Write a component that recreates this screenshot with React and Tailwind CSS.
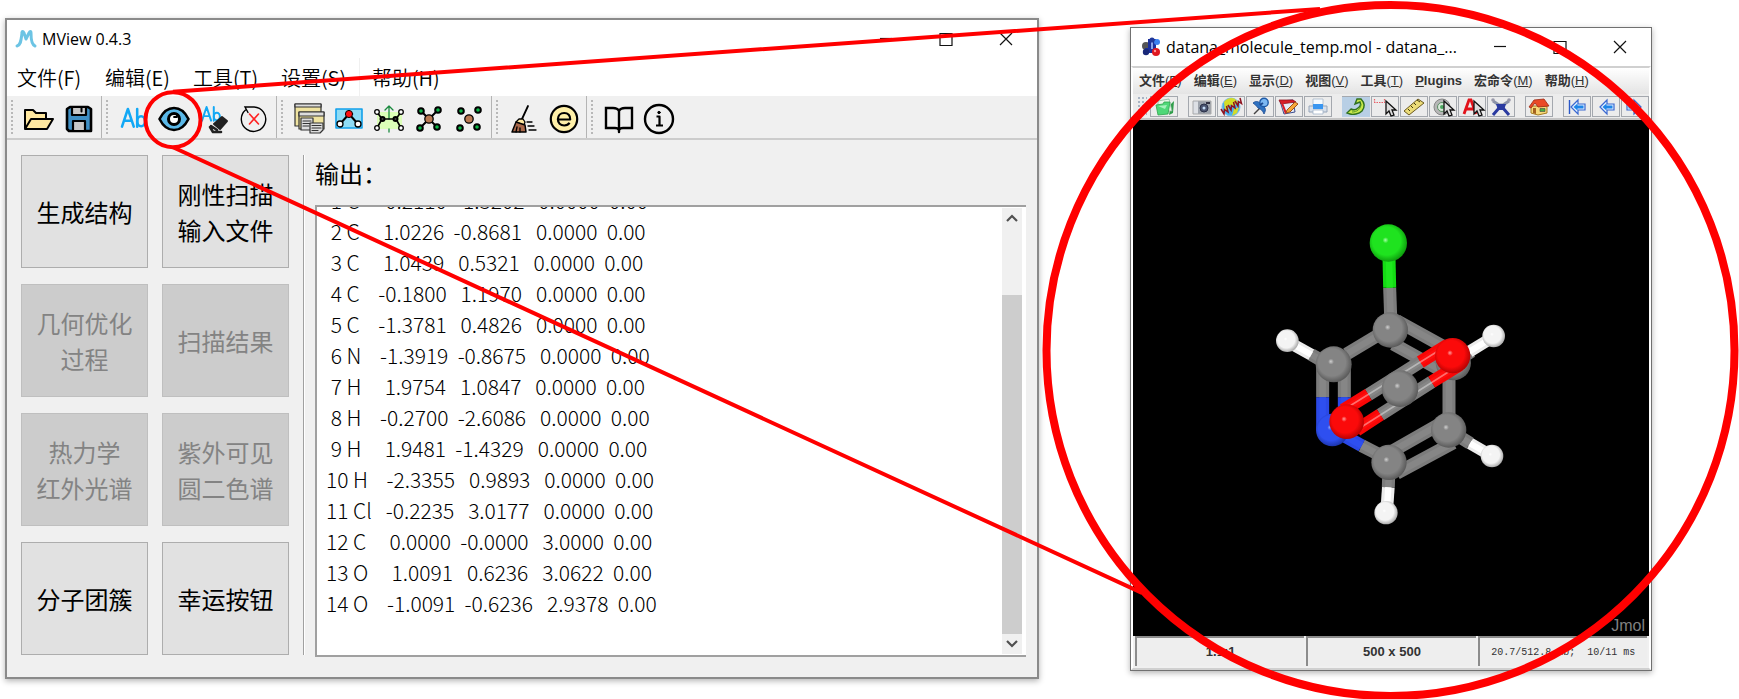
import React from "react";

const atoms = [
  " 1 C    -0.2110  -1.3202   0.0000  0.00",
  " 2 C     1.0226  -0.8681   0.0000  0.00",
  " 3 C     1.0439   0.5321   0.0000  0.00",
  " 4 C    -0.1800   1.1970   0.0000  0.00",
  " 5 C    -1.3781   0.4826   0.0000  0.00",
  " 6 N    -1.3919  -0.8675   0.0000  0.00",
  " 7 H     1.9754   1.0847   0.0000  0.00",
  " 8 H    -0.2700  -2.6086   0.0000  0.00",
  " 9 H     1.9481  -1.4329   0.0000  0.00",
  "10 H    -2.3355   0.9893   0.0000  0.00",
  "11 Cl   -0.2235   3.0177   0.0000  0.00",
  "12 C     0.0000  -0.0000   3.0000  0.00",
  "13 O     1.0091   0.6236   3.0622  0.00",
  "14 O    -1.0091  -0.6236   2.9378  0.00",
];

const actions = [
  { lines: ["生成结构"] },
  { lines: ["刚性扫描", "输入文件"] },
  { lines: ["几何优化", "过程"], disabled: true },
  { lines: ["扫描结果"], disabled: true },
  { lines: ["热力学", "红外光谱"], disabled: true },
  { lines: ["紫外可见", "圆二色谱"], disabled: true },
  { lines: ["分子团簇"] },
  { lines: ["幸运按钮"] },
];

/* ---------- main window icons, drawn on a 32 x 32 grid ---------- */

const I = ({ children }) => (
  <svg viewBox="0 0 32 32" className="size-8" fill="none" stroke="#000" strokeWidth="2" strokeLinejoin="round" strokeLinecap="round">
    {children}
  </svg>
);

const OpenIcon = () => (
  <I>
    <path d="M2 25V7h8l3 3h10v5" fill="#ffe8a0" />
    <path d="M2 26 8 16h22l-6 10z" fill="#ffe8a0" />
  </I>
);
const SaveIcon = () => (
  <I>
    <path d="M7 4h18l3 2v22H6l-2-2V6z" fill="#3f8fc4" strokeWidth="2.6" />
    <path d="M9 4h14v8H9z" fill="#c8c8c8" strokeWidth="2.2" />
    <path d="M10 18h12v10H10z" fill="#c8c8c8" strokeWidth="2.2" />
    <path d="M18.500 5.500v3" />
  </I>
);
const Ab = ({ x, y, s }) => (
  <g transform={`translate(${x} ${y}) scale(${s})`} stroke="#12a8f5" strokeWidth="2.600">
    <path d="M0 18 6 0l6 18M2.500 12h7M15.500 0v18" />
    <ellipse cx="19.500" cy="12.500" rx="4" ry="5" />
  </g>
);
const LabelIcon = () => (
  <I>
    <Ab x={4} y={6} s={0.98} />
  </I>
);
const EyeIcon = () => (
  <I>
    <path d="M1.500 16C5 9 10 5 16 5s11 4 14.500 11C27 23 22 27 16 27S5 23 1.500 16z" fill="#5ab8e8" strokeWidth="2.600" />
    <circle cx="16" cy="16" r="5.500" fill="#fff" strokeWidth="3" />
    <path d="M16 14h3v-3" strokeWidth="1.800" />
  </I>
);
const EraseLabelIcon = () => (
  <I>
    <Ab x={4} y={4} s={0.76} />
    <path d="m16 21 8-7 5 4-7 8z" fill="#222" stroke="#222" />
    <path d="m13 23 6 4M12 24l3 5h8" stroke="#222" strokeWidth="2.600" />
  </I>
);
const ResetIcon = () => (
  <I>
    <path d="M7.500 7a12.200 12.200 0 1 0 8.500-3H7l3 5.500" strokeWidth="1.400" strokeLinejoin="miter" />
    <path d="m11.500 11 9 10m0-10-9 10" stroke="#f22" strokeWidth="1.600" />
  </I>
);
const WindowsIcon = () => (
  <I>
    <g strokeWidth="1.200" stroke="#333">
      <path d="M2 1h26v22H2z" fill="#efe3a0" />
      <path d="M2 1h26v3H2z" fill="#ddd" />
      <path d="M6 9h25v17H6z" fill="#efe3a0" />
      <path d="M6 9h25v4H6z" fill="#ddd" />
      <path d="M8 15h12v12H8z" fill="#ddd" />
      <path d="M10 18h8M10 20.500h8M10 23h6" />
      <path d="M17 20h13v7l-3 3H17z" fill="#ddd" />
      <path d="M19 22.500h9M19 25h9M19 27.500h6" />
    </g>
  </I>
);
const MoleculeBoxIcon = () => (
  <I>
    <path d="M3 6h26v19H3z" fill="#8fdcf5" stroke="#12a0ea" strokeWidth="1.600" />
    <path d="m7 21 9-10 9 10" />
    <circle cx="16" cy="11" r="3.600" fill="#f11" strokeWidth="1" />
    <circle cx="7" cy="21" r="3" fill="#fff" strokeWidth="1.300" />
    <circle cx="25" cy="21" r="3" fill="#fff" strokeWidth="1.300" />
  </I>
);
const AxisIcon = () => (
  <I>
    <path d="M4 9h25v17H4z" fill="#dcffb8" stroke="none" />
    <path d="M16 29v-3M16 16V3m-4 4 4-4 4 4" stroke="#1a8a3e" strokeWidth="1.300" />
    <path d="m4 9 5 7h14l5-7M4 25l5-9m14 0 5 9" strokeWidth="1.600" />
    {[[4, 9], [28, 9], [4, 25], [28, 25]].map(([x, y]) => (
      <circle key={`${x}-${y}`} cx={x} cy={y} r="2.300" fill="#fff" strokeWidth="1.300" />
    ))}
    <circle cx="9.500" cy="16" r="2" fill="#444" />
    <circle cx="22.500" cy="16" r="2" fill="#444" />
  </I>
);
const corners = [[8, 8], [25, 7], [7, 25], [24, 24]];
const BondedIcon = () => (
  <I>
    <path d="m8 8 8 8 9-9M7 25l9-9 8 8" />
    {corners.map(([x, y]) => (
      <circle key={`${x}-${y}`} cx={x} cy={y} r="2.800" fill="#10b848" strokeWidth="2" />
    ))}
    <circle cx="16" cy="16" r="4.200" fill="#b97850" strokeWidth="1.300" />
  </I>
);
const AtomsIcon = () => (
  <I>
    {corners.map(([x, y]) => (
      <circle key={`${x}-${y}`} cx={x} cy={y} r="2.800" fill="#10b848" strokeWidth="2" />
    ))}
    <circle cx="16" cy="16" r="4.200" fill="#b97850" strokeWidth="1.300" />
  </I>
);
const BroomIcon = () => (
  <I>
    <path d="m20 3-6 13" strokeWidth="1.800" />
    <path d="m8 19 3-3h4l2 3-1 3z" fill="#ffe8a0" strokeWidth="1.300" />
    <path d="M8 19 4 29h14l-1-7z" fill="#a9684a" strokeWidth="1.500" />
    <path d="m9 24-1 5m4-4v4M19 19h5m-4 4h6m-5 4h7" strokeWidth="1.300" />
  </I>
);
const ElectronIcon = () => (
  <I>
    <circle cx="16" cy="16" r="13.200" fill="#fff0a8" strokeWidth="2.200" />
    <path d="M10 16.500h12.200c.3-4-2.200-6.500-6-6.500s-6.300 2.500-6.300 6.300 2.500 6.200 6.300 6.200c2.500 0 4.300-.9 5.300-2.700" strokeWidth="2.200" strokeLinecap="butt" />
  </I>
);
const BookIcon = () => (
  <I>
    <path d="M16 8c-1-2-3-3-6-3H3v20h9c2 0 3.500.7 4 2 .5-1.300 2-2 4-2h9V5h-7c-3 0-5 1-6 3zv21" strokeWidth="2.400" strokeLinejoin="miter" />
  </I>
);
const InfoIcon = () => (
  <I>
    <circle cx="16" cy="16" r="14" strokeWidth="2.400" />
    <path d="M13.500 13.500h3V22M13 22.500h7" strokeWidth="2.200" strokeLinecap="butt" />
    <circle cx="16" cy="9.500" r="1.200" fill="#000" strokeWidth="1" />
  </I>
);

const toolGroups = [
  [["打开", OpenIcon], ["保存", SaveIcon]],
  [["标签", LabelIcon], ["查看", EyeIcon], ["清除标签", EraseLabelIcon], ["重置", ResetIcon]],
  [["窗口", WindowsIcon], ["分子", MoleculeBoxIcon], ["坐标轴", AxisIcon], ["成键", BondedIcon], ["原子", AtomsIcon]],
  [["清理", BroomIcon], ["电荷", ElectronIcon]],
  [["手册", BookIcon], ["关于", InfoIcon]],
];

/* ---------- viewer icons, drawn on a 28 x 20 grid ---------- */

const J = ({ children }) => (
  <svg viewBox="0 0 28 20" className="h-5 w-7 shrink-0" fill="none" stroke="#333" strokeWidth="1">
    {children}
  </svg>
);
const PointerShape = ({ x = 0 }) => (
  <path transform={`translate(${x} 0)`} d="m0 4 0 13 3-3 2 5 3-1-2-5h4z" fill="#ddd" stroke="#111" strokeWidth="1.300" />
);
const Arrow = ({ flip, bar }) => (
  <J>
    <g transform={flip ? "translate(28 0) scale(-1 1)" : undefined}>
      {bar && <path d="M6.500 3v14" stroke="#2a58c8" strokeWidth="1.400" />}
      <path d="m8 10 7-7v4h7v6h-7v4z" fill="#e4f1ff" stroke="#3a68d0" strokeWidth="1.200" />
      <path d="m10.500 10 4-3.500V8.500h6v3h-6v2z" fill="#1e86e8" stroke="none" />
    </g>
  </J>
);
const viewerGroups = [
  [
    ["打开文件", () => (
      <J>
        <path d="m21 7 3-3-1 12-4 2z" fill="#2f9e4a" stroke="none" />
        <path d="M8 4 19 2l3 12H8z" fill="#eaf8ea" stroke="#8cb89a" strokeWidth=".8" />
        <path d="m6 8 7-1 1-2 6 0-2 12-10 1z" fill="#4fd878" stroke="#2fa44c" strokeWidth=".8" />
        <path d="m8 9 9-1-2 4z" fill="#a6f2bc" stroke="none" />
      </J>
    )],
  ],
  [
    ["截图", () => (
      <J>
        <path d="M5 4h18v13H5z" fill="#9da3ac" stroke="#aaa" />
        <path d="M5.500 4.500H10v12H5.500z" fill="#dde0e5" stroke="none" />
        <circle cx="16" cy="11" r="4" fill="#4a5470" stroke="#2a3048" />
        <circle cx="16" cy="11" r="1.500" fill="#c4dcf6" stroke="none" />
        <path d="M18 5h4v2h-4z" fill="#334" stroke="none" />
      </J>
    )],
    ["网页", () => (
      <J>
        <circle cx="14" cy="10" r="9" fill="#4ab0ee" stroke="#7cc0e8" />
        <path d="M7 5c3-4 8-5 11-3l3 3-4 4-5-1-1 5-3 1zM17 12l5-2-2 6-5 3z" fill="#d4dc28" stroke="none" />
        <path d="m4 12 3 5 .5-4.500 3.500 2.500L9.500 9m1.500-1 3 5 .5-4.500 3.500 2.500L16.500 5M18 4l3 5 .5-4.500 3 2L23 1" stroke="#8e1420" strokeWidth="1.500" />
      </J>
    )],
    ["固定", () => (
      <J>
        <path d="m8 17 6-6" stroke="#444" strokeWidth="1.400" />
        <path d="M7 6c2-2 5-2 7 0l5 5c1 2 0 4-1 6-1-3-3-5-6-6-1-2-3-3-5-5z" fill="#2f72c0" stroke="#1d4a90" strokeWidth=".8" />
        <circle cx="18" cy="5.500" r="4.200" fill="#7cb8f2" stroke="#1d5aa8" strokeWidth="1.400" />
        <path d="m14 8 3-2" stroke="#1d4a90" strokeWidth="2" />
      </J>
    )],
    ["编辑脚本", () => (
      <J>
        <path d="m5 4 13-1 2 12-11 2z" fill="#e4ebf8" stroke="#3c4c8c" />
        <path d="m4 3 14 0 3 2-15 2z" fill="#d81e2a" stroke="#901520" strokeWidth=".8" />
        <path d="m6 6 4 11 2-1-4-10z" fill="#d81e2a" stroke="none" />
        <path d="m12 13 8-8 3 2-8 8-4 1z" fill="#f5a83a" stroke="#a0501a" />
      </J>
    )],
    ["打印", () => (
      <J>
        <path d="M9 2h10v7H9z" fill="#f4faff" stroke="#a9b8c8" strokeWidth=".8" />
        <path d="M5 9h18v6H5z" fill="#d8e0ea" stroke="#97a6ba" />
        <path d="M9 7h10v5H9z" fill="#3a96f0" stroke="none" />
        <path d="M9 13h10v4H9z" fill="#fff" stroke="#a5b6ca" strokeWidth=".8" />
      </J>
    )],
  ],
  [
    ["旋转", () => (
      <J>
        <path d="M0 0h28v20H0z" fill="#b8cfe5" stroke="none" />
        <path d="M19 2c4 4 4 8 1 12-3 3-9 4-12 3l-3-1 4-4c2 1 5 1 7-1 3-2 3-4 2-6l-5 2 2-5z" fill="#c8e84a" stroke="#2f7020" strokeWidth="1.400" />
        <path d="M10 15c5 0 9-3 9-8" stroke="#5a9a28" />
      </J>
    )],
    ["选择", () => (
      <J>
        <path d="M3 5.500h11M3.500 2v3M13.500 2v3" stroke="#e86068" strokeDasharray="1.500 1" strokeWidth="1.200" />
        <PointerShape x={15} />
      </J>
    )],
    ["测量", () => (
      <J>
        <path d="M4 14 18 2l6 4L9 18z" fill="#ecdc78" stroke="#6b5a20" />
        <path d="m8 12 2 2m1-5 2 2m1-5 2 2m1-5 3 2" stroke="#443a10" />
      </J>
    )],
    ["居中", () => (
      <J>
        <circle cx="13" cy="10" r="8" fill="#b7b7b7" stroke="#888" />
        <circle cx="13" cy="10" r="4.500" fill="#d8e8d8" stroke="#5e8f66" />
        <circle cx="13" cy="10" r="2" fill="#4ca860" stroke="none" />
        <PointerShape x={15} />
      </J>
    )],
    ["标注", () => (
      <J>
        <path d="m6 17 5-14h2l5 14M8 12h8" stroke="#e2121a" strokeWidth="2.800" />
        <PointerShape x={16} />
      </J>
    )],
    ["建模", () => (
      <J>
        <path d="m6 4 6 4h4l6-4" stroke="#8a92a8" strokeWidth="3" />
        <path d="m6 18 6-7h4l6 7" stroke="#2a3aa0" strokeWidth="3" />
        <path d="M9 7h10l-2 6h-6z" fill="#2a3aa0" stroke="none" />
        <circle cx="6" cy="3" r="1.800" fill="#99a" stroke="none" />
        <circle cx="22" cy="3" r="1.800" fill="#99a" stroke="none" />
      </J>
    )],
  ],
  [
    ["主页", () => (
      <J>
        <path d="M6 9h16v7l-9 2-7-2z" fill="#f7d978" stroke="#a67c20" />
        <path d="m4 10 5-7 10-1 5 7-11 1-3-4-4 5z" fill="#ea4a26" stroke="#9c2a14" strokeWidth=".8" />
        <path d="M8 11h3v6l-3-1z" fill="#a5621e" stroke="none" />
        <path d="M15 11.500h5v3h-5z" fill="#49b044" stroke="#444" strokeWidth=".6" />
      </J>
    )],
  ],
  [
    ["第一帧", () => <Arrow bar />],
    ["上一帧", () => <Arrow />],
    ["下一帧", () => <Arrow flip />],
  ],
];

const viewerMenus = [["文件", "F"], ["编辑", "E"], ["显示", "D"], ["视图", "V"], ["工具", "T"], ["", "P", "lugins"], ["宏命令", "M"], ["帮助", "H"]];

const MViewLogo = () => (
  <svg viewBox="0 0 22 20" className="h-5 w-[22px]" fill="none" stroke="#6cc4e4" strokeWidth="3" strokeLinecap="round" strokeLinejoin="round">
    <path d="M2 17c4-1 4-6 5-13 0-2 1-2 2 0l2 6 3-6c1-2 2-2 2 0 0 7 1 12 4 13" />
  </svg>
);
const JmolLogo = () => (
  <svg viewBox="0 0 20 20" className="size-5">
    <circle cx="5" cy="9" r="4" fill="#555" />
    <path d="M7 2h3v9H7zM12 2h3v10h-3zM4 11h11v5H4z" fill="#1c309c" />
    <path d="M10 3h2v9h-2z" fill="#8aa4e8" />
    <circle cx="16" cy="5" r="3" fill="#3a80f0" />
    <circle cx="11" cy="3" r="2.600" fill="#20389a" />
    <circle cx="5" cy="15" r="3.200" fill="#182878" />
    <circle cx="15" cy="15" r="4" fill="#e01820" />
    <circle cx="14" cy="14" r="1.200" fill="#ff9a9a" />
  </svg>
);

function WindowControls() {
  return (
    <div className="flex pr-px">
      {[["最小化", "M1 6.500h12"], ["最大化", "M1 1.500h12v12H1z"], ["关闭", "m1 1 12 12m0-12L1 13"]].map(([label, d]) => (
        <button key={label} aria-label={label} className="flex w-[60px] items-center justify-center">
          <svg viewBox="0 0 14 15" className="h-[15px] w-3.5" fill="none" stroke="#111" strokeWidth="1.200">
            <path d={d} />
          </svg>
        </button>
      ))}
    </div>
  );
}

function MainWindow() {
  return (
    <section className="mt-[18px] self-start border-2 border-[#8a8a8a] bg-[#f0f0f0] shadow-[0_2px_6px_rgba(0,0,0,0.3)]">
      <header className="flex h-[38px] justify-between bg-white pl-2">
        <h1 className="flex items-center gap-[5px] font-['Open_Sans','Noto_Sans',sans-serif] text-base text-black">
          <MViewLogo />
          MView 0.4.3
        </h1>
        <WindowControls />
      </header>
      <nav className="flex h-[38px] bg-white text-xl font-[350]">
        {["文件(F)", "编辑(E)", "工具(T)", "设置(S)", "帮助(H)"].map((m) => (
          <button key={m} className="w-[88px] whitespace-nowrap border-l border-transparent pl-[9px] pt-0.5 text-left last:border-[#f0f0f0] last:pl-3">
            {m}
          </button>
        ))}
      </nav>
      <div className="flex h-11 border-b-2 border-[#cccccc]">
        {toolGroups.map((group, i) => (
          <div key={i} className="flex border-r border-[#b4b4b4] pr-0.5 last:border-0">
            <span className="my-1 ml-1 mr-1.5 w-0.5 border-l-2 border-dotted border-[#b8b8b8]" />
            {group.map(([label, Icon]) => (
              <button key={label} aria-label={label} className="flex w-10 items-center justify-center pt-1">
                <Icon />
              </button>
            ))}
          </div>
        ))}
      </div>
      <div className="flex pb-[22px] pl-3.5 pr-[11px] pt-[15px]">
        <div className="grid shrink-0 grid-cols-[127px_127px] gap-x-3.5 gap-y-4">
          {actions.map(({ lines, disabled }) => (
            <button
              key={lines[0]}
              disabled={disabled}
              className="h-[113px] border border-[#adadad] bg-[#e1e1e1] text-2xl/9 text-black disabled:border-[#bfbfbf] disabled:bg-[#cccccc] disabled:text-[#838383]"
            >
              {lines.map((l) => (
                <span key={l} className="block">{l}</span>
              ))}
            </button>
          ))}
        </div>
        <div className="ml-3.5 w-0.5 border-l border-r border-l-[#a0a0a0] border-r-white" />
        <div className="-mb-0.5 ml-2.5 flex min-w-0 grow flex-col">
          <h2 className="h-[50px] text-2xl/9">输出：</h2>
          <div className="flex h-[452px] border-y-2 border-l-2 border-[#a0a0a0] bg-white">
            <div className="flex grow flex-col justify-end overflow-hidden pb-9 pl-[9px] text-[21px]/[31px] font-light text-black">
              {atoms.map((row) => (
                <p key={row} className="shrink-0 whitespace-pre">{row}</p>
              ))}
            </div>
            <div className="my-px mr-1 flex w-5 flex-col bg-[#f0f0f0] text-[#505050]">
              <button aria-label="向上滚动" className="flex h-5 items-center justify-center">
                <svg viewBox="0 0 12 8" className="h-2 w-3" fill="none" stroke="currentColor" strokeWidth="2.200"><path d="m1 7 5-5 5 5" /></svg>
              </button>
              <div className="grow" />
              <div className="h-[339px] bg-[#cdcdcd]" />
              <button aria-label="向下滚动" className="flex h-5 items-center justify-center">
                <svg viewBox="0 0 12 8" className="h-2 w-3" fill="none" stroke="currentColor" strokeWidth="2.200"><path d="m1 1 5 5 5-5" /></svg>
              </button>
            </div>
          </div>
        </div>
      </div>
    </section>
  );
}

const Bond = ({ p, c = "#7c7c7c", hi = "#868686", w = 39 }) => (
  <>
    <path d={p} stroke={c} strokeWidth={w} />
    <path d={p} stroke={hi} strokeWidth={w / 2} />
  </>
);
const Ball = ({ x, y, r, c }) => <circle cx={x} cy={y} r={r} fill={`url(#ball-${c})`} />;
const shades = {
  green: ["#a8ffa8", "#1fe31f", "#0a8f0a"],
  grey: ["#d0d0d0", "#848484", "#505050"],
  red: ["#ff9c9c", "#fb0a0a", "#a80000"],
  blue: ["#8aa0ff", "#2e4ff0", "#182f9c"],
  white: ["#ffffff", "#f4f4f4", "#9a9a9a"],
};

function Molecule() {
  return (
    <svg viewBox="0 0 516 516" className="block size-full" fill="none" role="img" aria-label="Jmol">
      <defs>
        {Object.entries(shades).map(([name, [a, b, c]]) => (
          <radialGradient key={name} id={`ball-${name}`} cx="0.47" cy="0.46" r="0.58" fx="0.42" fy="0.42">
            <stop offset="0" stopColor={a} />
            <stop offset="0.14" stopColor={b} />
            <stop offset="0.65" stopColor={b} />
            <stop offset="1" stopColor={c} />
          </radialGradient>
        ))}
      </defs>
      <g transform="translate(107 80) scale(0.33333)">
        <Bond p="M449 263 452 350" />
        <Bond p="M447 170 449 263" c="#14dc14" hi="#1ee81e" />
        <Bond p="M470 362 640 456" />
        <Bond p="M460 432 610 515" />
        <Bond p="M410 408 320 462" />
        <Bond p="M627 500V660" />
        <Bond p="M640 488 695 454" />
        <Bond p="M688 455 745 420" c="#ececec" hi="#fff" w={36} />
        <Ball x={640} y={488} r={53} c="grey" />
        <Bond p="M248 500V592M313 500V592" />
        <Bond p="M248 592V690M313 592V690" c="#2b49e6" hi="#2e4ff0" />
        <Bond p="M365 737 420 765" />
        <Bond p="M290 695 365 737" c="#2b49e6" hi="#2e4ff0" />
        <Ball x={277} y={690} r={49} c="blue" />
        <Bond p="M440 763 600 672M470 820 640 728" />
        <Bond p="M446 830 445 862" />
        <Bond p="M445 862 441 920" c="#ececec" hi="#fff" w={38} />
        <Bond p="M650 705 690 730" />
        <Bond p="M690 730 738 758" c="#ececec" hi="#fff" w={36} />
        <Bond p="M250 484 214 464" />
        <Bond p="M214 464 160 434" c="#ececec" hi="#fff" w={36} />
        <Ball x={281} y={493} r={54} c="grey" />
        <Ball x={451} y={390} r={53} c="grey" />
        <Ball x={626} y={690} r={53} c="grey" />
        <Ball x={447} y={787} r={53} c="grey" />
        <Ball x={445} y={129} r={56} c="green" />
        <Ball x={142} y={422} r={34} c="white" />
        <Ball x={761} y={408} r={34} c="white" />
        <Ball x={756} y={768} r={34} c="white" />
        <Ball x={438} y={938} r={35} c="white" />
        <Bond p="M385 584 541 486M421 644 575 546" />
        <Bond p="M310 630 385 584M350 690 421 644M541 486 622 436M575 546 658 495" c="#f80606" hi="#ff0c0c" />
        <path d="M310 630 622 436M350 690 658 495" stroke="#fff" strokeOpacity="0.4" strokeWidth="5" />
        <Ball x={480} y={566} r={55} c="grey" />
        <Ball x={638} y={467} r={53} c="red" />
        <Ball x={320} y={665} r={52} c="red" />
      </g>
    </svg>
  );
}

function ViewerWindow() {
  const cell = "flex items-center justify-center border-l-2 border-t-2 border-[#8c8c8c] bg-[#eeeeee]";
  return (
    <section className="mt-[27px] self-start border border-[#707070] bg-[#f0f0f0] shadow-[0_2px_6px_rgba(0,0,0,0.3)]">
      <header className="flex h-[38px] justify-between bg-white pl-2.5">
        <h1 className="flex items-center gap-[5px] whitespace-nowrap font-['Open_Sans','Noto_Sans',sans-serif] text-base text-black">
          <JmolLogo />
          datana_molecule_temp.mol - datana_...
        </h1>
        <WindowControls />
      </header>
      <div className="border-2 border-[#d0d0d0] border-x-white">
        <nav className="flex h-[26px] items-center gap-3 bg-linear-to-b from-white to-[#e4e4e4] pl-1.5 font-['Liberation_Sans','Noto_Sans_CJK_SC',sans-serif] text-[13px] font-bold text-[#333]">
          {viewerMenus.map(([name, key, rest]) => (
            <button key={key} className="whitespace-nowrap">
              {name}
              {rest ? <><u>{key}</u>{rest}</> : <span className="font-normal">(<u>{key}</u>)</span>}
            </button>
          ))}
        </nav>
        <div className="flex h-[26px] gap-2.5 overflow-hidden border-b-2 border-[#c4c4c4] bg-[#ececec] pl-1 pt-0.5">
          {viewerGroups.map((group, i) => (
            <div key={i} className="flex shrink-0 gap-px">
              {i === 0 && <span className="mr-0.5 h-5 w-2.5 bg-[radial-gradient(#a8b4c4_1px,transparent_1px)] bg-size-[4px_4px]" />}
              {group.map(([label, Icon]) => (
                <button key={label} aria-label={label} className="flex h-[21px] w-7 items-center justify-center border border-[#a4a8ae]">
                  <Icon />
                </button>
              ))}
            </div>
          ))}
        </div>
        <div className="relative aspect-square bg-black">
          <Molecule />
          <span className="absolute bottom-0 right-1 font-['Liberation_Sans',sans-serif] text-base/5 text-[#808080]">Jmol</span>
        </div>
        <footer className="grid h-8 grid-cols-3 gap-0.5 px-0.5 pb-0.5 font-['Liberation_Sans',sans-serif] text-[13px] font-bold text-[#333]">
          <span className={cell}>1.1:1</span>
          <span className={cell}>500 x 500</span>
          <span className={`${cell} whitespace-pre font-['Liberation_Mono',monospace] text-[10px] font-normal`}>20.7/512.8 Mb;  10/11 ms</span>
        </footer>
      </div>
    </section>
  );
}

export default function App() {
  return (
    <main className="relative grid grid-cols-[1034fr_522fr] gap-x-[91px] bg-white pb-[21px] pl-[5px] pr-[87px] font-['Noto_Sans_CJK_SC',sans-serif]">
      <MainWindow />
      <ViewerWindow />
      <svg
        viewBox="0 0 1739 699"
        preserveAspectRatio="none"
        className="pointer-events-none absolute inset-0 size-full"
        fill="none"
        stroke="#ff0000"
        strokeWidth="4"
        aria-hidden="true"
      >
        <circle cx="173" cy="119.500" r="27.500" />
        <path d="M173 91.500 1320 9M173 147 1142 592" />
        <ellipse cx="1390.500" cy="350" rx="344" ry="345" strokeWidth="8" />
      </svg>
    </main>
  );
}
